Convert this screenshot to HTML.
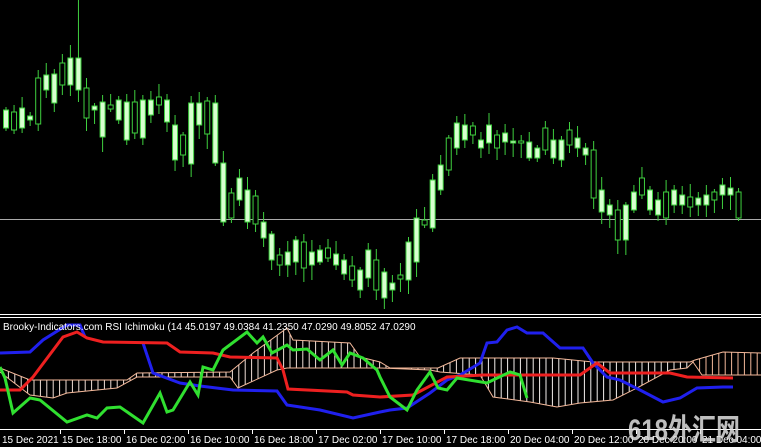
<!DOCTYPE html>
<html><head><meta charset="utf-8"><style>
html,body{margin:0;padding:0;background:#000;}
#c{position:relative;width:761px;height:447px;overflow:hidden;background:#000;}
svg{position:absolute;left:0;top:0}
.t{font-family:"Liberation Sans",sans-serif;font-size:10px;fill:#fff}
</style></head><body><div id="c">
<svg id="s" width="761" height="447" xmlns="http://www.w3.org/2000/svg">
<line x1="0" y1="219.5" x2="761" y2="219.5" stroke="#aaa" stroke-width="1"/>
<g id="cand"></g>
<line x1="0" y1="314.5" x2="761" y2="314.5" stroke="#fff"/>
<line x1="0" y1="317.5" x2="761" y2="317.5" stroke="#fff"/>
<g id="hat"></g>
<polyline id="pu" fill="none" stroke="#f3b89a" stroke-width="1"/>
<polyline id="pl" fill="none" stroke="#f3b89a" stroke-width="1"/>
<polyline fill="none" stroke="#2020ee" stroke-width="3" points="0,353 30,352 43,340 67,325 80,325 85,337"/>
<polyline fill="none" stroke="#2020ee" stroke-width="3" points="143,343 153,373 180,383 200,386 233,390 277,391 287,405 320,410 353,418 380,412 390,410 407,408 430,393 447,380 460,375 480,363 487,343 497,342 507,330 517,327 527,333 543,333 560,348 583,348 593,363 607,377 620,380 640,390 663,402 680,398 697,388 723,387 733,387"/>
<polyline fill="none" stroke="#ee2020" stroke-width="3" points="0,390 20,390 33,377 63,337 77,332 87,338 103,342 167,343 180,352 213,353 230,357 277,358 283,370 288,389 347,392 353,395 380,397 413,395 447,377 483,375 580,375 597,363 610,373 670,373 687,377 733,378"/>
<polyline fill="none" stroke="#30e030" stroke-width="3" points="0,367 5,378 13,413 30,398 40,400 67,422 87,415 97,418 107,408 120,407 143,423 160,393 167,412 173,410 190,382 198,395 203,367 213,370 223,350 247,332 257,343 263,337 272,353 287,345 293,350 307,349 320,360 333,350 342,365 350,353 363,358 377,370 380,377 390,397 407,410 417,390 430,372 438,388 447,390 457,378 487,383 493,380 510,372 520,375 527,398"/>
<text class="t" x="3" y="330">Brooky-Indicators.com RSI Ichimoku (14 45.0197 49.0384 41.2350 47.0290 49.8052 47.0290</text>
<line x1="0" y1="429.5" x2="761" y2="429.5" stroke="#fff"/>
<g id="ax"></g>
<text x="628" y="440" textLength="112" lengthAdjust="spacingAndGlyphs" font-family="Liberation Sans,'Noto Sans CJK SC',sans-serif" font-size="30" font-weight="bold" fill="#e0e0e0" opacity="0.85">618外汇网</text>
</svg></div>
<script>
var NS="http://www.w3.org/2000/svg";
function el(p,n,a){var e=document.createElementNS(NS,n);for(var k in a)e.setAttribute(k,a[k]);p.appendChild(e);return e;}
var C=[[110,128],[112,130],[108,128],[116,120],[78,124],[75,90],[74,103],[63,85],[58,85],[58,90],[88,118],[106,110],[102,137],[105,109],[100,120],[102,140],[102,133],[100,138],[100,115],[97,105],[100,122],[125,160],[135,155],[103,164],[103,125],[101,134],[103,163],[163,222],[193,218],[178,200],[190,222],[196,224],[222,238],[234,260],[255,265],[252,265],[240,262],[242,268],[252,265],[250,262],[248,258],[254,265],[260,274],[266,280],[270,290],[250,278],[260,290],[272,298],[283,290],[275,279],[242,280],[218,262],[220,225],[180,228],[165,190],[138,170],[123,148],[125,140],[126,135],[140,148],[125,143],[135,148],[133,142],[141,143],[141,143],[142,158],[148,158],[128,150],[140,158],[140,160],[130,145],[138,148],[148,155],[150,198],[190,212],[205,215],[210,240],[205,240],[192,210],[178,195],[190,210],[200,215],[192,218],[190,205],[195,205],[197,207],[198,205],[195,205],[192,200],[185,195],[188,195],[192,218]];
var g=document.getElementById("cand");
C.forEach(function(c,i){var x=6+i*8.05;var t=c[0],b=c[1];var h=(i*37)%11+3,l=(i*53)%13+3;if(i==9)h=58;
el(g,"line",{x1:x,y1:t-h,x2:x,y2:b+l,stroke:"#3fd03f","stroke-width":1});
var filled=(i%3!=1);
el(g,"rect",{x:x-2.5,y:t,width:5,height:Math.max(b-t,1.5),fill:filled?"#d8ffd0":"#000",stroke:"#3fd03f","stroke-width":1});});
var U=[[0,368],[30,380],[127,380],[137,373],[230,372],[253,353],[287,328],[293,340],[350,343],[360,357],[380,362],[390,368],[430,368],[438,368],[460,358],[553,358],[593,362],[690,362],[695,360],[723,352],[761,353]];
var L=[[0,372],[30,395],[53,398],[67,393],[117,388],[137,377],[180,377],[230,377],[238,388],[277,370],[287,368],[380,368],[430,370],[440,372],[480,375],[493,397],[530,402],[557,407],[580,403],[613,400],[637,388],[670,370],[687,368],[693,362],[702,375],[761,375]];
function pts(a){return a.map(function(p){return p.join(",")}).join(" ");}
document.getElementById("pu").setAttribute("points",pts(U));
document.getElementById("pl").setAttribute("points",pts(L));
function at(a,x){for(var i=0;i<a.length-1;i++){if(x>=a[i][0]&&x<=a[i+1][0]){var f=(x-a[i][0])/(a[i+1][0]-a[i][0]||1);return a[i][1]+f*(a[i+1][1]-a[i][1]);}}return a[a.length-1][1];}
var hg=document.getElementById("hat");
for(var x=2;x<761;x+=6.4){var a=at(U,x),b=at(L,x);el(hg,"line",{x1:x,y1:a,x2:x,y2:b,stroke:x<460?"#f0e0d8":(x>690?"#f3b89a":"#f4f0ee"),"stroke-width":1});}
var lab=["15 Dec 2021","15 Dec 18:00","16 Dec 02:00","16 Dec 10:00","16 Dec 18:00","17 Dec 02:00","17 Dec 10:00","17 Dec 18:00","20 Dec 04:00","20 Dec 12:00","20 Dec 20:00","21 Dec 04:00"];
var ax=document.getElementById("ax");
lab.forEach(function(s,i){var x=i==0?2:62+(i-1)*64;if(i>0)el(ax,"line",{x1:x-1.5,y1:430,x2:x-1.5,y2:434,stroke:"#fff"});var t=el(ax,"text",{x:x,y:443,"class":"t"});t.textContent=s;});
</script>
</body></html>
